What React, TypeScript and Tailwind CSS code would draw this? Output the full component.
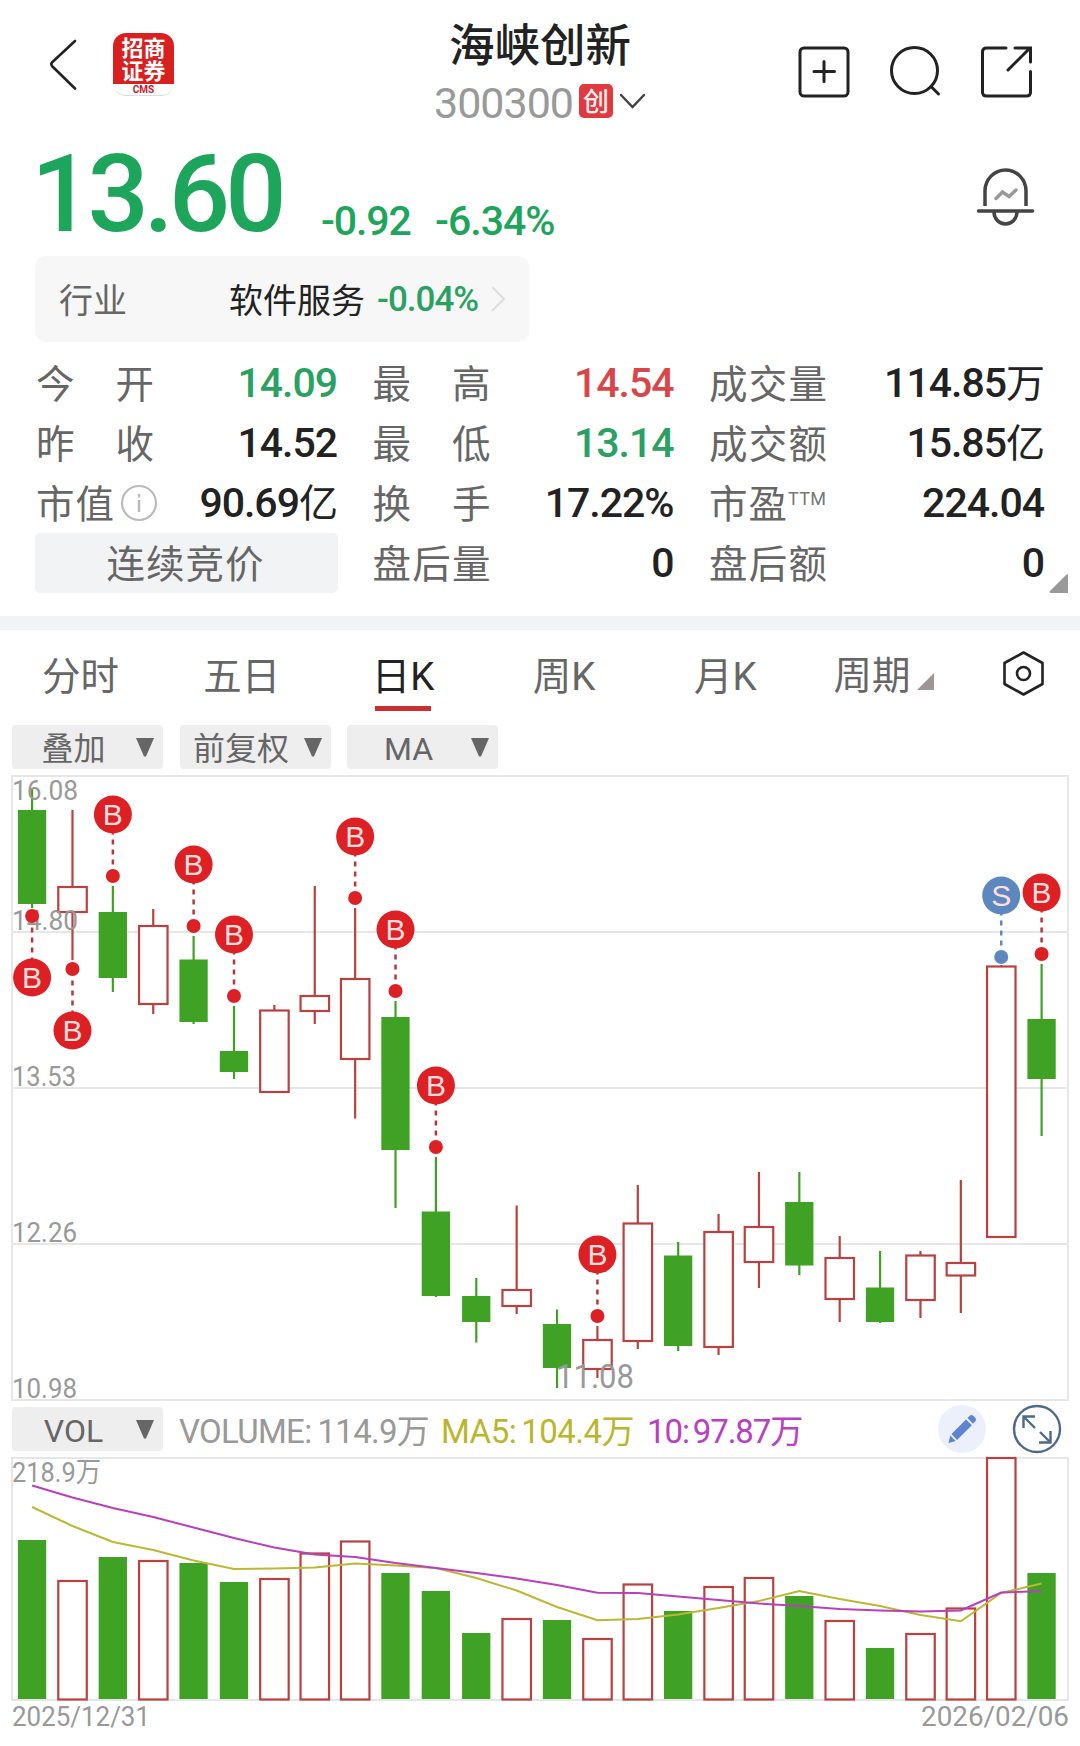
import clsx from "clsx";

type Candle = {
  up: boolean;
  high: number;
  top: number;
  bottom: number;
  low: number;
  vol: number;
};

type Mark = { i: number; type: "B" | "S"; y: number; dot: number };

const GREEN = "#3fa224";
const RED = "#b8423f";
const GRID = "#e6e6e6";
const STEP = 40.38;

const cx = (i: number) => 32.1 + i * STEP;

// y values are chart pixels, vol is the top of the volume bar
const candles: Candle[] = [
  { up: false, high: 788, top: 810, bottom: 904, low: 908, vol: 1540 },
  { up: true, high: 810, top: 886, bottom: 913, low: 960, vol: 1580 },
  { up: false, high: 886, top: 912, bottom: 978, low: 992, vol: 1557 },
  { up: true, high: 909, top: 925, bottom: 1005, low: 1014, vol: 1560 },
  { up: false, high: 936, top: 959.5, bottom: 1022, low: 1024, vol: 1563 },
  { up: false, high: 1006, top: 1051, bottom: 1072, low: 1079, vol: 1582 },
  { up: true, high: 1005, top: 1009.5, bottom: 1093, low: 1093, vol: 1578 },
  { up: true, high: 886, top: 995, bottom: 1012, low: 1024, vol: 1552.5 },
  { up: true, high: 908, top: 978, bottom: 1060, low: 1118.5, vol: 1540.5 },
  { up: false, high: 1001, top: 1017, bottom: 1150, low: 1208, vol: 1573 },
  { up: false, high: 1157, top: 1211.5, bottom: 1296, low: 1297, vol: 1591 },
  { up: false, high: 1278, top: 1296, bottom: 1322, low: 1342.5, vol: 1633 },
  { up: true, high: 1205.5, top: 1289, bottom: 1307, low: 1314, vol: 1618 },
  { up: false, high: 1309.5, top: 1324, bottom: 1368, low: 1388, vol: 1620 },
  { up: true, high: 1326, top: 1339, bottom: 1370, low: 1378, vol: 1638 },
  { up: true, high: 1185, top: 1222.5, bottom: 1342, low: 1349, vol: 1583.5 },
  { up: false, high: 1242, top: 1255.5, bottom: 1346, low: 1351, vol: 1611 },
  { up: true, high: 1214, top: 1231, bottom: 1348, low: 1355, vol: 1586 },
  { up: true, high: 1172, top: 1226, bottom: 1263, low: 1288, vol: 1577 },
  { up: false, high: 1172, top: 1202, bottom: 1265.5, low: 1275, vol: 1596 },
  { up: true, high: 1236, top: 1257, bottom: 1300, low: 1322, vol: 1620 },
  { up: false, high: 1251, top: 1287.5, bottom: 1322, low: 1323, vol: 1648 },
  { up: true, high: 1251, top: 1254.5, bottom: 1301, low: 1318, vol: 1633 },
  { up: true, high: 1180, top: 1262, bottom: 1276.5, low: 1313, vol: 1607.5 },
  { up: true, high: 965, top: 965.5, bottom: 1238, low: 1238, vol: 1457 },
  { up: false, high: 964, top: 1019, bottom: 1079, low: 1136, vol: 1573 },
];

const marks: Mark[] = [
  { i: 0, type: "B", y: 977.5, dot: 916 },
  { i: 1, type: "B", y: 1030.5, dot: 969 },
  { i: 2, type: "B", y: 814.5, dot: 876 },
  { i: 4, type: "B", y: 864.5, dot: 926 },
  { i: 5, type: "B", y: 934.5, dot: 996 },
  { i: 8, type: "B", y: 836.5, dot: 898 },
  { i: 9, type: "B", y: 929.5, dot: 991 },
  { i: 10, type: "B", y: 1085.5, dot: 1147 },
  { i: 14, type: "B", y: 1254.5, dot: 1316 },
  { i: 24, type: "S", y: 895.5, dot: 957 },
  { i: 25, type: "B", y: 892.5, dot: 954 },
];

const ma5 = [
  1507, 1526, 1542, 1550, 1560.5, 1569, 1568.5, 1567.5, 1563.5, 1565.5, 1568, 1578, 1590.5, 1607,
  1620.3, 1619, 1614.5, 1608, 1601, 1591, 1599, 1606, 1615, 1621.3, 1593, 1583.5,
];
const ma10 = [
  1485.5, 1497.5, 1508, 1517, 1527.5, 1538, 1547.5, 1554.5, 1557, 1563, 1568, 1573, 1578.5, 1585,
  1592.7, 1593, 1596.5, 1600, 1603.5, 1606, 1609, 1610.5, 1611.5, 1610.5, 1592.5, 1591,
];

const toPoints = (list: number[]) => list.map((y, i) => `${cx(i)},${y}`).join(" ");

const priceLabels = [
  { text: "16.08", y: 800, w: 66 },
  { text: "14.80", y: 930, w: 66 },
  { text: "13.53", y: 1086, w: 64 },
  { text: "12.26", y: 1242, w: 65 },
  { text: "10.98", y: 1397.5, w: 65 },
];

const Header = () => (
  <header className="flex h-[130px] justify-between pl-[47px] pr-[47px]">
    <div className="flex w-[330px] gap-[34px] pt-[33px]">
      <svg width="32" height="64" viewBox="0 0 32 64" fill="none" stroke="#222" strokeWidth="2.6" strokeLinecap="round" strokeLinejoin="round">
        <path d="M28 8 5.2 29.2q-1.8 2 0 4L28 55.5" />
      </svg>
      <div className="flex h-[63px] w-[61px] flex-col overflow-hidden rounded-[13px] border-b border-[#ddd] bg-white">
        <div className="flex h-[52px] justify-center bg-[#d9201f] pt-[4px]">
          <span className="w-[44px] break-all text-[22px] font-bold leading-[23px] text-white">招商证券</span>
        </div>
        <span className="text-center text-[10px] font-bold leading-[11px] text-[#c8202a]">CMS</span>
      </div>
    </div>
    <div className="flex flex-col items-center pt-[24px]">
      <h1 className="text-[45.5px] font-medium leading-[46px] text-[#222]">海峡创新</h1>
      <div className="mt-[7px] flex items-center">
        <span className="pt-[5px] text-[43px] leading-[43px] tracking-[-1px] text-[#999]">300300</span>
        <span className="ml-[6px] flex h-[34px] w-[34px] items-center justify-center rounded-[5px] bg-[#e0393f] pt-[2px] text-[26px] font-medium leading-none text-[#fff0f0]">
          创
        </span>
        <svg className="ml-[6px]" width="27" height="18" viewBox="0 0 27 18" fill="none" stroke="#444" strokeWidth="2.5" strokeLinecap="round">
          <path d="M2 3l11.5 12L25 3" />
        </svg>
      </div>
    </div>
    <div className="flex w-[330px] justify-end gap-[36px] pt-[44px]">
      <svg width="55" height="55" viewBox="0 0 55 55" fill="none" stroke="#222" strokeWidth="3" strokeLinecap="round">
        <rect x="4" y="4" width="48" height="48" rx="4" />
        <path d="M28 17.5v20M18 27.5h20.5" />
      </svg>
      <svg width="55" height="55" viewBox="0 0 55 55" fill="none" stroke="#222" strokeWidth="3" strokeLinecap="round">
        <circle cx="27.5" cy="26.5" r="23" />
        <path d="M44 42.5l7.5 7.5" />
      </svg>
      <svg width="55" height="55" viewBox="0 0 55 55" fill="none" stroke="#222" strokeWidth="3" strokeLinecap="round">
        <path d="M28 4H8.5q-4 0-4 4v40q0 4 4 4h40q4 0 4-4V27.5M37 4h15.5v14M30 26 51.5 4.500" />
      </svg>
    </div>
  </header>
);

const Quote = () => (
  <section className="flex h-[126px] items-start pl-[31px] pr-[44px] text-[#1da55b]">
    <span className="mt-[10px] w-[290px] text-[108px] font-medium leading-[108px] tracking-[-5px]">13.60</span>
    <span className="mt-[71px] w-[114px] text-[41px] font-medium leading-[41px] tracking-[-1.1px]">-0.92</span>
    <span className="mt-[71px] text-[41px] font-medium leading-[41px] tracking-[-1px]">-6.34%</span>
    <svg className="ml-auto mt-[36px]" width="61" height="61" viewBox="0 0 61 61" fill="none" stroke="#444" strokeWidth="3.5" strokeLinecap="round">
      <path strokeLinecap="butt" d="M10 40V25a20.5 21 0 0 1 41 0v15" />
      <path d="M3.5 45h54M19 46a11.5 12 0 0 0 23 0" />
      <path stroke="#999" d="M21 32.5l6.5-6.5 6.5 4.5 7-6.5" />
    </svg>
  </section>
);

const Industry = () => (
  <section className="ml-[35px] flex h-[86px] w-[494px] items-center rounded-[10px] bg-[#f7f7f7] pl-[24px]">
    <span className="w-[170px] pt-[3px] text-[34px] leading-none text-[#666]">行业</span>
    <span className="pt-[3px] text-[34px] leading-none text-[#222]">软件服务</span>
    <span className="ml-[12px] w-[102px] whitespace-nowrap text-[35px] font-medium leading-none tracking-[-1px] text-[#2aa163]">-0.04%</span>
    <svg className="ml-[11px]" width="16" height="28" viewBox="0 0 16 28" fill="none" stroke="#dedede" strokeWidth="2.2">
      <path d="M2 2l12 12L2 26" />
    </svg>
  </section>
);

const Label = ({ text }: { text: string }) => (
  <span className="flex w-[118px] justify-between pt-[4px] text-[38.5px] leading-none text-[#666]">
    {text.split("").map((c) => (
      <span key={c}>{c}</span>
    ))}
  </span>
);

const Value = ({ text, unit, color = "text-[#222]" }: { text: string; unit?: string; color?: string }) => (
  <span className={clsx("ml-auto flex items-center pt-px text-[41px] font-medium leading-none tracking-[-1px]", color)}>
    {text}
    {unit && <span className="pt-[2px] text-[39px] font-normal leading-none">{unit}</span>}
  </span>
);

const Stats = () => (
  <section className="relative mt-[11px] grid h-[240px] grid-cols-[301px_301px_335px] grid-rows-4 gap-x-[35.5px] pl-[36px]">
    <div className="flex items-center"><Label text="今开" /><Value text="14.09" color="text-[#2aa163]" /></div>
    <div className="flex items-center"><Label text="最高" /><Value text="14.54" color="text-[#d8464a]" /></div>
    <div className="flex items-center"><Label text="成交量" /><Value text="114.85" unit="万" /></div>

    <div className="flex items-center"><Label text="昨收" /><Value text="14.52" /></div>
    <div className="flex items-center"><Label text="最低" /><Value text="13.14" color="text-[#2aa163]" /></div>
    <div className="flex items-center"><Label text="成交额" /><Value text="15.85" unit="亿" /></div>

    <div className="flex items-center">
      <span className="pt-[4px] text-[38.5px] leading-none tracking-[1px] text-[#666]">市值</span>
      <svg className="ml-[5px]" width="38" height="38" viewBox="0 0 38 38" fill="none" stroke="#bbb" strokeWidth="2.2">
        <circle cx="19" cy="19" r="17" />
        <path d="M19 16v12M19 10v3.5" strokeWidth="2.5" />
      </svg>
      <Value text="90.69" unit="亿" />
    </div>
    <div className="flex items-center"><Label text="换手" /><Value text="17.22%" /></div>
    <div className="flex items-center">
      <span className="pt-[4px] text-[38.5px] leading-none tracking-[1px] text-[#666]">市盈</span>
      <span className="mb-[8px] text-[18px] leading-none tracking-[0.3px] text-[#777]">TTM</span>
      <Value text="224.04" />
    </div>

    <div className="-ml-px flex w-[303px] items-center justify-center rounded-[5px] bg-[#f2f3f5] pr-[2px] pt-[4px] text-[38.5px] leading-none tracking-[1px] text-[#666]">
      连续竞价
    </div>
    <div className="flex items-center"><Label text="盘后量" /><Value text="0" /></div>
    <div className="flex items-center"><Label text="盘后额" /><Value text="0" /></div>

    <svg className="absolute bottom-0 right-[12px]" width="19" height="19" viewBox="0 0 19 19">
      <path d="M19 0v19H1q-1-1 0-2L17 1z" fill="#999" />
    </svg>
  </section>
);

const Tabs = () => (
  <nav className="flex h-[95px] pt-[20px] text-[38.5px] leading-[52px] text-[#666]">
    {["分时", "五日", "日K", "周K", "月K"].map((t) => (
      <div key={t} className="flex w-[161.2px] flex-col items-center">
        <span className={clsx("pt-px leading-[51px]", t === "日K" && "text-[#222]")}>{t}</span>
        {t === "日K" && <span className="mt-[4px] h-[5px] w-[56px] bg-[#cb2f2e]" />}
      </div>
    ))}
    <div className="flex w-[156px] justify-center">
      周期
      <svg className="ml-[7px] mt-[23px]" width="17" height="17" viewBox="0 0 17 17">
        <path d="M17 0v17H0z" fill="#a09696" />
      </svg>
    </div>
    <svg className="ml-[39px]" width="45" height="47" viewBox="0 0 45 47" fill="none" stroke="#222" strokeWidth="2.6" strokeLinejoin="round">
      <path d="M22.5 2.5 41.5 13v21L22.5 44.5 3.5 34V13z" />
      <circle cx="22.5" cy="23.5" r="6.5" />
    </svg>
  </nav>
);

const Select = ({ text }: { text: string }) => (
  <div className="relative flex h-[44px] w-[151px] items-center justify-center rounded-[4px] bg-[#eee] pr-[28px] pt-[4px] text-[32px] leading-none text-[#666]">
    {text}
    <svg className="absolute right-[9px] top-[13px]" width="18" height="19" viewBox="0 0 18 19">
      <path d="M0 0h18L10 18.5H8z" fill="#666" />
    </svg>
  </div>
);

const Marker = ({ mark }: { mark: Mark }) => {
  const x = cx(mark.i);
  const color = mark.type === "B" ? "#dc2024" : "#5d87bf";
  const line = mark.type === "B" ? "#b8383a" : "#5d87bf";
  const dir = mark.dot > mark.y ? 1 : -1;
  return (
    <g>
      <line x1={x} x2={x} y1={mark.y + dir * 15} y2={mark.dot - dir * 11} stroke={line} strokeWidth="2.5" strokeDasharray="5 5" />
      <circle cx={x} cy={mark.dot} r="7" fill={color} />
      <circle cx={x} cy={mark.y} r="19" fill={color} />
      <text x={x} y={mark.y + 10.5} textAnchor="middle" fontSize="30" fill="#ffdede" className="font-['Liberation_Sans',sans-serif]">
        {mark.type}
      </text>
    </g>
  );
};

const KLine = () => (
  <svg className="block" width="1080" height="638" viewBox="0 769 1080 638">
    <rect x="12" y="776" width="1056" height="624" fill="none" stroke={GRID} strokeWidth="2" />
    {[932, 1088, 1244].map((y) => (
      <line key={y} x1="12" x2="1068" y1={y} y2={y} stroke={GRID} strokeWidth="2" />
    ))}
    {candles.map((c, i) => (
      <g key={i}>
        <line x1={cx(i)} x2={cx(i)} y1={c.high} y2={c.low} stroke={c.up ? RED : GREEN} strokeWidth="2.2" />
        {c.up ? (
          <rect x={cx(i) - 14.2} y={c.top + 1} width="28.5" height={c.bottom - c.top - 2} fill="#fff" stroke={RED} strokeWidth="2.2" />
        ) : (
          <rect x={cx(i) - 14.2} y={c.top} width="28.3" height={c.bottom - c.top} fill={GREEN} />
        )}
      </g>
    ))}
    <g fill="#999" fontSize="28">
      {priceLabels.map((l) => (
        <text key={l.text} x="12" y={l.y} textLength={l.w} lengthAdjust="spacingAndGlyphs">
          {l.text}
        </text>
      ))}
      <text x="556" y="1388" fontSize="33" textLength="78" lengthAdjust="spacingAndGlyphs">
        11.08
      </text>
    </g>
    {marks.map((m) => (
      <Marker key={m.i} mark={m} />
    ))}
  </svg>
);

const VolumeBar = () => (
  <div className="flex h-[44px] items-center pl-[12px] text-[33px] leading-none">
    <Select text="VOL" />
    <div className="ml-[16px] flex w-[262px] gap-[6px] pt-[5px] tracking-[-0.7px] text-[#999]">
      <span>VOLUME:</span>
      <span>114.9万</span>
    </div>
    <div className="flex w-[206px] gap-[5px] pt-[5px] tracking-[-0.5px] text-[#bab62c]">
      <span>MA5:</span>
      <span>104.4万</span>
    </div>
    <div className="flex gap-[4px] pt-[5px] tracking-[-1.1px] text-[#b840c2]">
      <span>10:</span>
      <span>97.87万</span>
    </div>
    <svg className="ml-auto" width="48" height="48" viewBox="0 0 48 48">
      <circle cx="24" cy="24" r="24" fill="#ecf0fa" />
      <path d="M10.5 38l1.8-7.5 5.4 5.4zM13.5 29 28 14.5l5.8 5.8L19 35zM29.5 13l2.5-2.5q1.5-1 3 0l2.5 2.5q1.2 1.5 0 3L35 18.8z" fill="#5d84d0" />
    </svg>
    <svg className="ml-[26px] mr-[18px]" width="50" height="50" viewBox="0 0 50 50" fill="none" stroke="#4c6b8a" strokeWidth="2.4">
      <circle cx="25" cy="25" r="23" />
      <path d="M23 24 12 13M11.5 24V12.5H23M28 28l10 10M38.5 27v11.5H27" />
    </svg>
  </div>
);

const Volume = () => (
  <svg className="block" width="1080" height="295" viewBox="0 1451 1080 295">
    <rect x="12" y="1458" width="1056" height="242" fill="none" stroke={GRID} strokeWidth="2" />
    {candles.map((c, i) =>
      c.up ? (
        <rect key={i} x={cx(i) - 14.2} y={c.vol + 1} width="28.5" height={1699.5 - c.vol - 1} fill="#fff" stroke={RED} strokeWidth="2.2" />
      ) : (
        <rect key={i} x={cx(i) - 14.2} y={c.vol} width="28.3" height={1699 - c.vol} fill={GREEN} />
      )
    )}
    <polyline points={toPoints(ma5)} fill="none" stroke="#bcb834" strokeWidth="2" />
    <polyline points={toPoints(ma10)} fill="none" stroke="#b840bd" strokeWidth="2" />
    <g fill="#999" fontSize="28">
      <text x="12" y="1482" textLength="89" lengthAdjust="spacingAndGlyphs">
        218.9万
      </text>
      <text x="12" y="1726" textLength="138" lengthAdjust="spacingAndGlyphs">
        2025/12/31
      </text>
      <text x="921" y="1726" textLength="148" lengthAdjust="spacingAndGlyphs">
        2026/02/06
      </text>
    </g>
  </svg>
);

const App = () => {
  return (
    <div className="h-[1746px] w-[1080px] overflow-hidden bg-white font-['Roboto','Noto_Sans_CJK_SC',sans-serif]">
      <Header />
      <Quote />
      <Industry />
      <Stats />
      <div className="mt-[23px] h-[14px] bg-[#f2f3f5]" />
      <Tabs />
      <div className="flex gap-[16.5px] pl-[12px]">
        <Select text="叠加" />
        <Select text="前复权" />
        <Select text="MA" />
      </div>
      <KLine />
      <VolumeBar />
      <Volume />
    </div>
  );
};

export default App;
